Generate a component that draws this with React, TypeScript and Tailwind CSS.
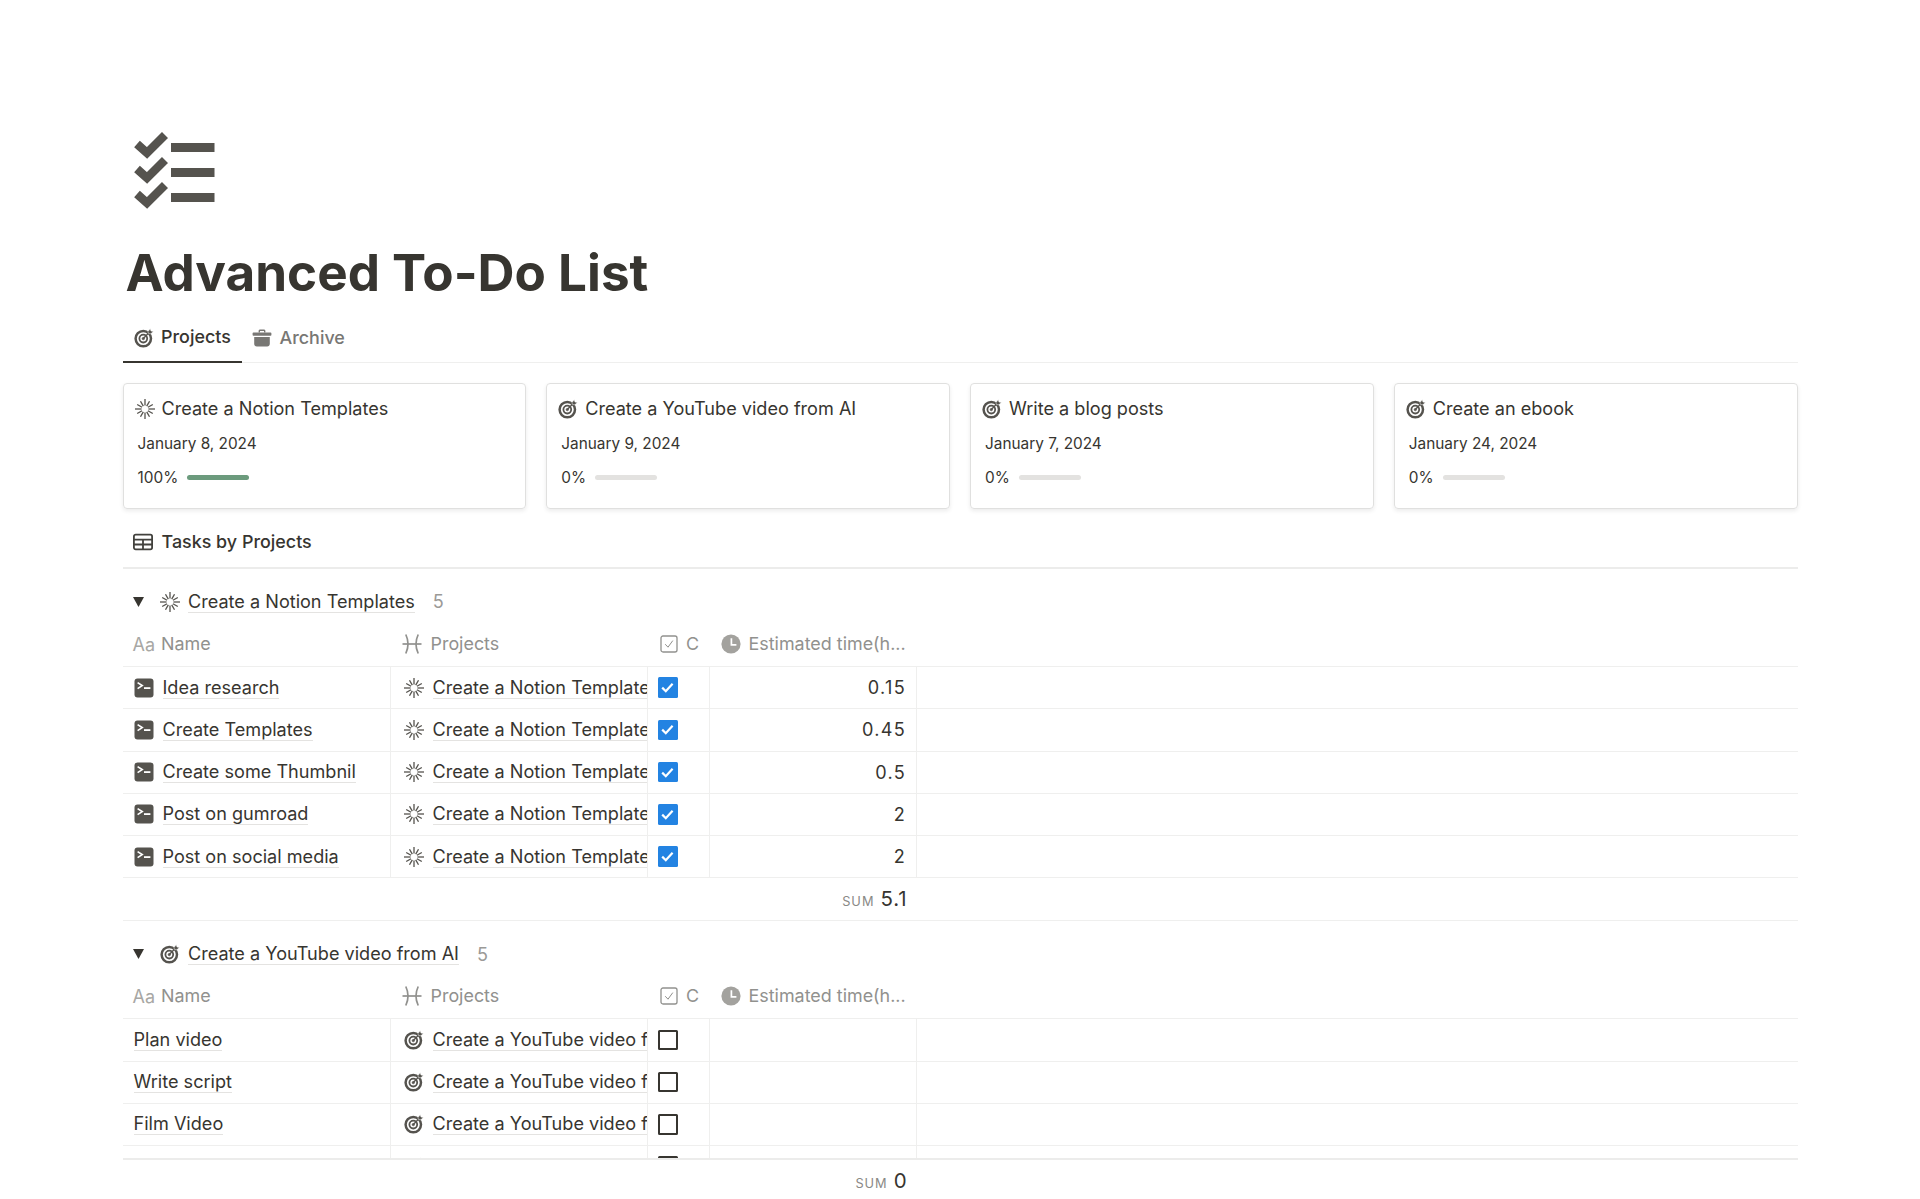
import type { ReactNode } from 'react';

function ChecklistLogo() {
  const rows = [0, 25, 50];
  return (
    <svg width="82" height="77" viewBox="0 0 82 77" fill="none">
      {rows.map((y) => (
        <g key={y}>
          <polyline points={`4,${12 + y} 14,${21 + y} 32,${3 + y}`} stroke="#55534e" strokeWidth="8.5" />
          <rect x="38" y={11 + y} width="43.5" height="9" fill="#55534e" />
        </g>
      ))}
    </svg>
  );
}

function TargetIcon({ size = 20 }: { size?: number }) {
  return (
    <svg width={size} height={size} viewBox="0 0 20 20" fill="none" stroke="#55534e">
      <circle cx="9.3" cy="10.6" r="7.7" strokeWidth="2.5" />
      <circle cx="9.3" cy="10.6" r="3.9" strokeWidth="1.8" />
      <circle cx="9.3" cy="10.6" r="1.2" fill="#55534e" strokeWidth="0.6" />
      <path d="M9.3 10.6 15.6 4" strokeWidth="1.4" />
      <path d="M14 3.6 16.2 0.8 17 3 19.4 3.6 16.8 5.8 14.4 5.4Z" fill="#55534e" stroke="white" strokeWidth="0.5" />
    </svg>
  );
}

function BurstIcon({ size = 20 }: { size?: number }) {
  const angles = Array.from({ length: 12 }, (_, i) => (i * Math.PI) / 6);
  return (
    <svg width={size} height={size} viewBox="0 0 20 20" fill="none" stroke="#55534e" strokeWidth="1.3">
      {angles.map((a, i) => {
        const outer = i % 3 === 0 ? 10 : 9;
        return (
          <line
            key={i}
            x1={10 + Math.cos(a) * 3.4}
            y1={10 + Math.sin(a) * 3.4}
            x2={10 + Math.cos(a) * outer}
            y2={10 + Math.sin(a) * outer}
          />
        );
      })}
    </svg>
  );
}

function TerminalIcon() {
  return (
    <svg width="20" height="20" viewBox="0 0 20 20">
      <rect x="0.5" y="0.5" width="19" height="19" rx="3" fill="#55534e" />
      <path d="M3.6 4.6 8.2 7.6 3.6 10.6" fill="none" stroke="white" strokeWidth="1.7" />
      <rect x="10" y="9.2" width="6.4" height="1.8" fill="white" />
    </svg>
  );
}

function TableIcon() {
  return (
    <svg width="20" height="20" viewBox="0 0 20 20" fill="none" stroke="#42413d" strokeWidth="1.8">
      <rect x="0.9" y="2.6" width="18.2" height="14.8" rx="1.8" />
      <path d="M0.9 7.6H19.1M0.9 12.5H19.1M10 7.6V17.4" />
    </svg>
  );
}

function ArchiveIcon() {
  return (
    <svg width="20" height="20" viewBox="0 0 20 20" fill="#787774">
      <path d="M6.6 4.4V2.9C6.6 1.9 7.3 1.4 8.2 1.4H11.8C12.7 1.4 13.4 1.9 13.4 2.9V4.4H12V3H8V4.4Z" />
      <rect x="0.6" y="4.6" width="18.8" height="3.2" rx="0.8" />
      <path d="M2.2 9H17.8V15.8C17.8 17.4 16.8 18.4 15.2 18.4H4.8C3.2 18.4 2.2 17.4 2.2 15.8Z" />
    </svg>
  );
}

function RelationIcon() {
  return (
    <svg width="20" height="20" viewBox="0 0 20 20" fill="none" stroke="#91918e" strokeWidth="1.7">
      <path d="M0.5 10H19.5" />
      <path d="M3.8 0.5C6.6 6.5 6.6 13.5 3.8 19.5" />
      <path d="M16.2 0.5C13.4 6.5 13.4 13.5 16.2 19.5" />
    </svg>
  );
}

function CheckHeadIcon() {
  return (
    <svg width="18" height="18" viewBox="0 0 18 18" fill="none" stroke="#91918e">
      <rect x="1" y="1" width="16" height="16" rx="2" strokeWidth="1.3" />
      <path d="M5.2 9.2 8 12.2 12.8 5.6" strokeWidth="1" />
    </svg>
  );
}

function ClockIcon() {
  return (
    <svg width="20" height="20" viewBox="0 0 20 20">
      <circle cx="10" cy="10" r="9.6" fill="#a3a29e" />
      <path d="M10.4 4.2V10.8H15.4" fill="none" stroke="white" strokeWidth="1.7" />
    </svg>
  );
}

function Checkbox({ checked }: { checked: boolean }) {
  if (!checked) {
    return <div className="w-[20.5px] h-[20.5px] border-2 border-[#373530] rounded-[1.5px]" />;
  }
  return (
    <div className="w-[20.5px] h-[20.5px] bg-[#2383e2] rounded-[1.5px] flex items-center justify-center">
      <svg width="15" height="15" viewBox="0 0 15 15" fill="none" stroke="white" strokeWidth="2.2">
        <path d="M2.2 7.6 5.8 11.2 12.6 3.8" />
      </svg>
    </div>
  );
}

function Linked({ children }: { children: ReactNode }) {
  return <span className="border-b-[1.5px] border-[#e4e3e1] leading-[21px] whitespace-nowrap">{children}</span>;
}

const colClass = 'grid grid-cols-[268.5px_256.5px_62px_207.5px_1fr]';

function HeaderRow() {
  return (
    <div className={`${colClass} h-[45px] items-center border-b-[1.25px] border-[#efefee] text-[#91918e] text-[17.92px]`}>
      <div className="flex items-center pl-[10px]">
        <span className="w-[28.5px] text-[#a8a7a4] text-[18px]">Aa</span>
        <span>Name</span>
      </div>
      <div className="flex items-center pl-[11px]">
        <span className="w-[28.5px]"><RelationIcon /></span>
        <span>Projects</span>
      </div>
      <div className="flex items-center pl-[12px]">
        <span className="w-[26.5px]"><CheckHeadIcon /></span>
        <span>C</span>
      </div>
      <div className="flex items-center pl-[11px]">
        <span className="w-[28px]"><ClockIcon /></span>
        <span>Estimated time(h...</span>
      </div>
    </div>
  );
}

interface TaskRowProps {
  name: string;
  project: string;
  hasTerminal?: boolean;
  burst?: boolean;
  done?: boolean;
  hours?: string;
}

function TaskRow({ name, project, hasTerminal, burst, done = false, hours }: TaskRowProps) {
  return (
    <div className={`${colClass} h-[42.25px] border-b-[1.25px] border-[#efefee] text-[18.1px] text-[#373530]`}>
      <div className="flex items-center gap-[9px] pl-[11px] border-r-[1.25px] border-[#efefee]">
        {hasTerminal && <TerminalIcon />}
        <Linked>{name}</Linked>
      </div>
      <div className="flex items-center gap-[8.5px] pl-[13px] border-r-[1.25px] border-[#efefee] overflow-hidden">
        <span className="shrink-0">{burst ? <BurstIcon /> : <TargetIcon />}</span>
        <Linked>{project}</Linked>
      </div>
      <div className="flex items-center pl-[10px] border-r-[1.25px] border-[#efefee]">
        <Checkbox checked={done} />
      </div>
      <div className="flex items-center justify-end pr-[10px] border-r-[1.25px] border-[#efefee] tracking-[1.3px]">
        {hours}
      </div>
      <div />
    </div>
  );
}

function SumRow({ value }: { value: string }) {
  return (
    <div className={`${colClass} items-center`}>
      <div className="col-span-4 flex items-baseline justify-end gap-[6px] pr-[9.5px]">
        <span className="text-[12.8px] text-[#8a8986] tracking-[1px]">SUM</span>
        <span className="text-[20.48px] text-[#373530] tracking-[0.9px]">{value}</span>
      </div>
    </div>
  );
}

function GroupHeader({ icon, title }: { icon: ReactNode; title: string }) {
  return (
    <div className="h-[40px] flex items-center text-[18.1px] text-[#373530]">
      <svg className="ml-[10px]" width="11" height="10" viewBox="0 0 11 10" fill="#373530">
        <polygon points="0,0 11,0 5.5,10" />
      </svg>
      <span className="ml-[16px] w-[28.5px]">{icon}</span>
      <Linked>{title}</Linked>
      <span className="ml-[18px] text-[#9b9a97]">5</span>
    </div>
  );
}

function ProjectCard({ title, date, pct, burst }: { title: string; date: string; pct: number; burst?: boolean }) {
  return (
    <div className="h-[126px] rounded-[4px] border border-[#e0e0df] shadow-[0_2px_4px_rgba(15,15,15,0.08)] px-[14px] text-[#373530]">
      <div className="flex items-center h-[50px] -ml-[3px] gap-[7px] text-[18.1px]">
        {burst ? <BurstIcon /> : <TargetIcon />}
        <span>{title}</span>
      </div>
      <div className="text-[15.36px] leading-[20px]">{date}</div>
      <div className="flex items-center gap-[9px] text-[15.36px] h-[20px] mt-[13.5px]">
        <span>{pct}%</span>
        <div className={`w-[62px] h-[5px] rounded-full ${pct === 100 ? 'bg-[#6c9b7d]' : 'bg-[#e3e2e0]'}`} />
      </div>
    </div>
  );
}

const notionTasks = [
  { name: 'Idea research', hours: '0.15' },
  { name: 'Create Templates', hours: '0.45' },
  { name: 'Create some Thumbnil', hours: '0.5' },
  { name: 'Post on gumroad', hours: '2' },
  { name: 'Post on social media', hours: '2' },
];

const videoTasks = ['Plan video', 'Write script', 'Film Video', 'Publish video'];

export default function App() {
  return (
    <div className="h-[1199px] overflow-hidden bg-white pl-[122.5px] pr-[122.5px] pt-[132px] font-['Inter',sans-serif] text-[#373530]">
      <div className="pl-[10px]">
        <ChecklistLogo />
      </div>
      <h1 className="mt-[33px] h-[60px] pl-[3px] text-[51.2px] leading-[60px] font-bold">Advanced To-Do List</h1>

      <div className="mt-[10px] h-[51px] flex border-b-[1.25px] border-[#efefee] text-[17.92px] font-medium">
        <div className="h-[51px] w-[119px] flex items-center gap-[7.5px] pl-[11px] pt-[2px] border-b-[2.5px] border-[#373530]">
          <TargetIcon />
          <span>Projects</span>
        </div>
        <div className="h-[51px] flex items-center gap-[7.5px] pl-[10.5px] pt-[1px] text-[#787774]">
          <ArchiveIcon />
          <span>Archive</span>
        </div>
      </div>

      <div className="mt-[20px] grid grid-cols-4 gap-[20px]">
        <ProjectCard title="Create a Notion Templates" date="January 8, 2024" pct={100} burst />
        <ProjectCard title="Create a YouTube video from AI" date="January 9, 2024" pct={0} />
        <ProjectCard title="Write a blog posts" date="January 7, 2024" pct={0} />
        <ProjectCard title="Create an ebook" date="January 24, 2024" pct={0} />
      </div>

      <div className="h-[60px] flex items-center gap-[8.5px] pl-[10.5px] pt-[8px] border-b-[2px] border-[#ececeb] text-[17.92px] font-medium">
        <TableIcon />
        <span>Tasks by Projects</span>
      </div>

      <div className="mt-[13px]">
        <GroupHeader icon={<BurstIcon />} title="Create a Notion Templates" />
        <HeaderRow />
        {notionTasks.map((t) => (
          <TaskRow key={t.name} name={t.name} project="Create a Notion Templates" hasTerminal burst done hours={t.hours} />
        ))}
        <div className="h-[43px] flex flex-col justify-center border-b-[1.25px] border-[#efefee]">
          <SumRow value="5.1" />
        </div>
      </div>

      <div className="mt-[13px]">
        <GroupHeader icon={<TargetIcon />} title="Create a YouTube video from AI" />
        <HeaderRow />
        <div className="h-[140.5px] overflow-hidden border-b-[2px] border-[#ececeb]">
          {videoTasks.map((name) => (
            <TaskRow key={name} name={name} project="Create a YouTube video from AI" />
          ))}
        </div>
        <div className="h-[44px] flex flex-col justify-center">
          <SumRow value="0" />
        </div>
      </div>
    </div>
  );
}
